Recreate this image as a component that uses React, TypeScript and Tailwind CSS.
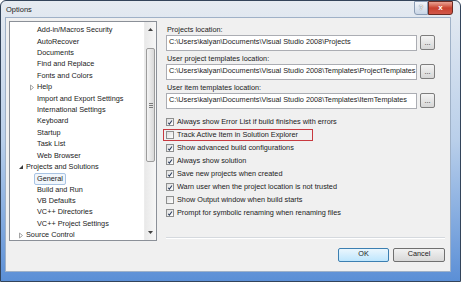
import React from 'react';

type TreeItem = {
  label: string;
  level: 1 | 2;
  arrow?: 'open' | 'closed';
  selected?: boolean;
};

const tree: TreeItem[] = [
  { label: 'Add-in/Macros Security', level: 2 },
  { label: 'AutoRecover', level: 2 },
  { label: 'Documents', level: 2 },
  { label: 'Find and Replace', level: 2 },
  { label: 'Fonts and Colors', level: 2 },
  { label: 'Help', level: 2, arrow: 'closed' },
  { label: 'Import and Export Settings', level: 2 },
  { label: 'International Settings', level: 2 },
  { label: 'Keyboard', level: 2 },
  { label: 'Startup', level: 2 },
  { label: 'Task List', level: 2 },
  { label: 'Web Browser', level: 2 },
  { label: 'Projects and Solutions', level: 1, arrow: 'open' },
  { label: 'General', level: 2, selected: true },
  { label: 'Build and Run', level: 2 },
  { label: 'VB Defaults', level: 2 },
  { label: 'VC++ Directories', level: 2 },
  { label: 'VC++ Project Settings', level: 2 },
  { label: 'Source Control', level: 1, arrow: 'closed' },
];

const locations = [
  { label: 'Projects location:', path: 'C:\\Users\\kalyan\\Documents\\Visual Studio 2008\\Projects' },
  { label: 'User project templates location:', path: 'C:\\Users\\kalyan\\Documents\\Visual Studio 2008\\Templates\\ProjectTemplates' },
  { label: 'User item templates location:', path: 'C:\\Users\\kalyan\\Documents\\Visual Studio 2008\\Templates\\ItemTemplates' },
];

const options = [
  { label: 'Always show Error List if build finishes with errors', checked: true },
  { label: 'Track Active Item in Solution Explorer', checked: false, highlight: true },
  { label: 'Show advanced build configurations', checked: true },
  { label: 'Always show solution', checked: true },
  { label: 'Save new projects when created', checked: true },
  { label: 'Warn user when the project location is not trusted', checked: true },
  { label: 'Show Output window when build starts', checked: false },
  { label: 'Prompt for symbolic renaming when renaming files', checked: true },
];

function Arrow({ kind }: { kind: 'open' | 'closed' }) {
  if (kind === 'open') {
    return (
      <svg width="6" height="6" viewBox="0 0 6 6">
        <path d="M5 1 L5 5 L1 5 Z" fill="#3a3a3a" />
      </svg>
    );
  }
  return (
    <svg width="6" height="7" viewBox="0 0 6 7">
      <path d="M1.5 1 L4.5 3.5 L1.5 6 Z" fill="none" stroke="#9a9a9a" strokeWidth="0.9" />
    </svg>
  );
}

function Checkbox({ checked }: { checked: boolean }) {
  return (
    <div className="w-[8px] h-[8px] border border-[#8e8f8f] bg-linear-to-br from-[#dedede] to-white flex items-center justify-center">
      {checked && (
        <svg width="7" height="7" viewBox="0 0 7 7">
          <path d="M1.3 3.8 L2.8 5.4 L5.8 1.2" fill="none" stroke="#2b3d5c" strokeWidth="1.2" />
        </svg>
      )}
    </div>
  );
}

function ScrollBar() {
  return (
    <div className="w-[12px] h-full flex flex-col bg-linear-to-r from-[#e9e9e9] to-[#f7f7f7] border-l border-[#ececec]">
      <div className="h-[15px] flex items-center justify-center">
        <svg width="5" height="3" viewBox="0 0 5 3">
          <path d="M0 3 L2.5 0 L5 3 Z" fill="#404040" />
        </svg>
      </div>
      <div className="mt-[11px] mx-[1px] h-[114px] rounded-[2px] border border-[#9c9c9c] bg-linear-to-r from-[#f4f4f4] to-[#d9d9d9] flex flex-col items-center justify-center gap-[1px]">
        <div className="w-[4px] h-[1px] bg-[#7a7a7a]" />
        <div className="w-[4px] h-[1px] bg-[#7a7a7a]" />
        <div className="w-[4px] h-[1px] bg-[#7a7a7a]" />
      </div>
      <div className="flex-1" />
      <div className="h-[15px] flex items-center justify-center">
        <svg width="5" height="3" viewBox="0 0 5 3">
          <path d="M0 0 L2.5 3 L5 0 Z" fill="#404040" />
        </svg>
      </div>
    </div>
  );
}

function TreeList() {
  return (
    <div className="w-[148px] h-[220px] border border-[#8b9098] bg-white flex overflow-hidden">
      <div className="flex-1 pt-[3px] overflow-hidden">
        {tree.map((item) => (
          <div key={item.label} className="h-[11.4px] flex items-center">
            <div className={item.level === 2 ? 'w-[19px]' : 'w-[8px]'} />
            <div className="w-[8px] flex items-center">{item.arrow && <Arrow kind={item.arrow} />}</div>
            <span
              className={
                item.selected
                  ? '-ml-[3px] px-[2px] leading-[10px] border border-[#a9c4e4] rounded-[2px] bg-[#f1f6fc] whitespace-nowrap'
                  : 'whitespace-nowrap'
              }
            >
              {item.label}
            </span>
          </div>
        ))}
      </div>
      <ScrollBar />
    </div>
  );
}

function DialogButton({ label, primary }: { label: string; primary?: boolean }) {
  return (
    <div
      className={
        primary
          ? 'w-[51px] h-[14px] rounded-[2px] border border-[#3c7fb1] bg-linear-to-b from-[#eaf6fd] to-[#bee6fd] flex items-center justify-center'
          : 'w-[52px] h-[14px] rounded-[2px] border border-[#707070] bg-linear-to-b from-[#f2f2f2] to-[#d8d8d8] flex items-center justify-center'
      }
    >
      {label}
    </div>
  );
}

export default function App() {
  return (
    <div className="w-[464px] h-[286px] bg-white text-[#1b1b1b] text-[7.3px] [font-family:'Liberation_Sans',Arial,sans-serif]">
      <div className="w-[461px] h-[282px] flex flex-col border border-[#33445a] rounded-t-[6px] bg-linear-to-b from-[#e6ebf1] via-[#b9cfea] to-[#5b8fd6]">
        {/* title bar */}
        <div className="h-[16px] flex justify-between items-start pl-[5px] pr-[7px]">
          <span className="mt-[3px] text-[7.5px] text-[#1a1a1a]">Options</span>
          <div className="flex">
            <div className="w-[14px] h-[14px] rounded-bl-[3px] border border-[#8a9cb4] bg-linear-to-b from-[#f2f5f9] to-[#c9d6e6] flex items-center justify-center text-[7px] text-white font-bold [text-shadow:0_0_1px_#333]">
              ?
            </div>
            <div className="w-[25px] h-[14px] rounded-br-[3px] border border-[#6b2a22] bg-linear-to-b from-[#e8a294] via-[#c9412f] to-[#d1584a] flex items-center justify-center text-white text-[8px] font-bold">
              x
            </div>
          </div>
        </div>
        {/* client area */}
        <div className="flex-1 ml-[4px] mr-[9px] mb-[9px] bg-[#f0f0f0] border border-[#9fb1c7] flex items-start pt-[3px] pl-[3px]">
          <TreeList />
          <div className="ml-[9px] w-[279px] flex flex-col">
            <div className="mt-[3.5px] flex flex-col gap-[3px]">
              {locations.map((loc) => (
                <div key={loc.label} className="flex flex-col">
                  <div className="h-[10px] leading-[10px] pl-[1px]">{loc.label}</div>
                  <div className="flex items-center gap-[3px]">
                    <div className="w-[251px] h-[16px] border border-[#abadb3] bg-white flex items-center pl-[2px] overflow-hidden whitespace-nowrap">
                      {loc.path}
                    </div>
                    <div className="w-[15px] h-[15px] rounded-[2px] border border-[#7d7d7d] bg-linear-to-b from-[#f4f4f4] to-[#d6d6d6] flex items-center justify-center leading-none">
                      ...
                    </div>
                  </div>
                </div>
              ))}
            </div>
            <div className="mt-[7px] flex flex-col">
              {options.map((opt) => (
                <div key={opt.label} className="h-[13px] flex items-center">
                  <div
                    className={
                      opt.highlight
                        ? '-ml-[3px] pl-[2px] w-[150px] h-[12px] border border-[#c8393f] flex items-center gap-[3px]'
                        : 'pl-[0px] flex items-center gap-[3px]'
                    }
                  >
                    <Checkbox checked={opt.checked} />
                    <span className="whitespace-nowrap">{opt.label}</span>
                  </div>
                </div>
              ))}
            </div>
            <div className="mt-[17px] h-[2px] border-t border-[#d5d9de] border-b border-b-white" />
            <div className="mt-[9px] flex justify-end gap-[4px]">
              <DialogButton label="OK" primary />
              <DialogButton label="Cancel" />
            </div>
          </div>
        </div>
      </div>
    </div>
  );
}
